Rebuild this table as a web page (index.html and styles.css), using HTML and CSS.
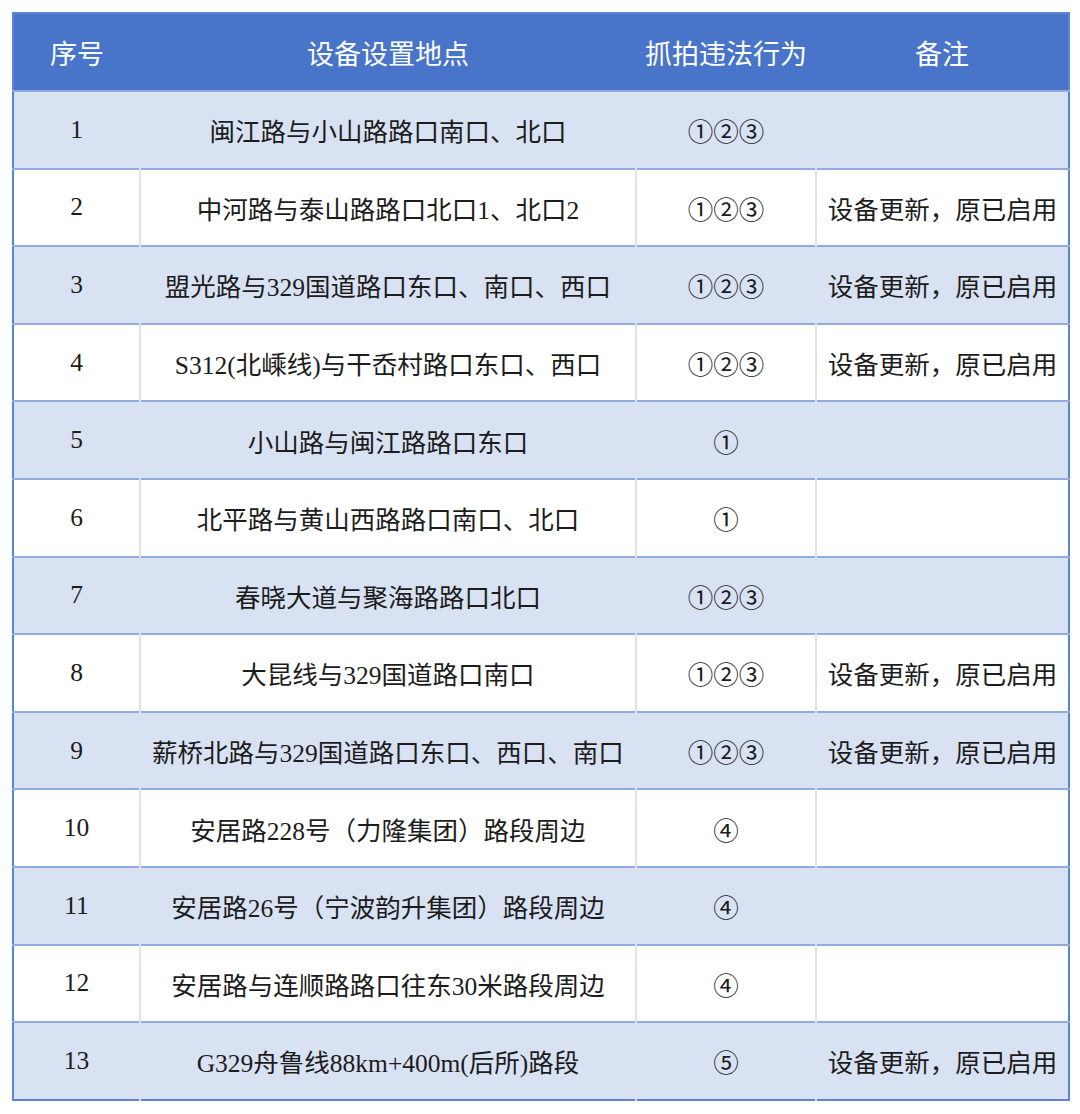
FILE: index.html
```html
<!DOCTYPE html>
<html lang="zh-CN">
<head>
<meta charset="utf-8">
<title>设备设置地点</title>
<link rel="stylesheet" href="styles.css">
</head>
<body>
<table class="sheet">
  <colgroup>
    <col class="c-no"><col class="c-loc"><col class="c-act"><col class="c-note">
  </colgroup>
  <thead>
    <tr><th>序号</th><th>设备设置地点</th><th>抓拍违法行为</th><th>备注</th></tr>
  </thead>
  <tbody>
    <tr class="alt"><td>1</td><td>闽江路与小山路路口南口、北口</td><td>①②③</td><td></td></tr>
    <tr><td>2</td><td>中河路与泰山路路口北口1、北口2</td><td>①②③</td><td>设备更新，原已启用</td></tr>
    <tr class="alt"><td>3</td><td>盟光路与329国道路口东口、南口、西口</td><td>①②③</td><td>设备更新，原已启用</td></tr>
    <tr><td>4</td><td>S312(北嵊线)与干岙村路口东口、西口</td><td>①②③</td><td>设备更新，原已启用</td></tr>
    <tr class="alt"><td>5</td><td>小山路与闽江路路口东口</td><td>①</td><td></td></tr>
    <tr><td>6</td><td>北平路与黄山西路路口南口、北口</td><td>①</td><td></td></tr>
    <tr class="alt"><td>7</td><td>春晓大道与聚海路路口北口</td><td>①②③</td><td></td></tr>
    <tr><td>8</td><td>大昆线与329国道路口南口</td><td>①②③</td><td>设备更新，原已启用</td></tr>
    <tr class="alt"><td>9</td><td>薪桥北路与329国道路口东口、西口、南口</td><td>①②③</td><td>设备更新，原已启用</td></tr>
    <tr><td>10</td><td>安居路228号（力隆集团）路段周边</td><td>④</td><td></td></tr>
    <tr class="alt"><td>11</td><td>安居路26号（宁波韵升集团）路段周边</td><td>④</td><td></td></tr>
    <tr><td>12</td><td>安居路与连顺路路口往东30米路段周边</td><td>④</td><td></td></tr>
    <tr class="alt"><td>13</td><td>G329舟鲁线88km+400m(后所)路段</td><td>⑤</td><td>设备更新，原已启用</td></tr>
  </tbody>
</table>
</body>
</html>
```

FILE: styles.css
```css
html, body {
  margin: 0;
  padding: 0;
  background: #ffffff;
}
body {
  padding: 12px 0 0 12px;
  font-family: "Liberation Serif", "Noto Sans CJK SC", serif;
  color: #1c1c1c;
}
.sheet {
  border-collapse: collapse;
  table-layout: fixed;
  width: 1056px;
  border: 2px solid #5b84d4;
}
.c-no { width: 127px; }
.c-loc { width: 496px; }
.c-act { width: 180px; }
.c-note { width: 253px; }

.sheet th {
  height: 76px;
  padding: 0;
  background: #4874c9;
  color: #ffffff;
  font-weight: normal;
  font-size: 27px;
  font-family: "Noto Sans CJK SC", sans-serif;
  text-align: center;
  border-bottom: 2px solid #8fabe0;
}
.sheet td {
  height: 75.6px;
  padding: 0;
  font-size: 25.5px;
  text-align: center;
  white-space: nowrap;
  border-top: 2px solid #8fabe0;
  border-left: 2px solid #e2e2e2;
}
.sheet td:first-child { border-left: none; }
.sheet tr.alt td {
  background: #d9e2f3;
  border-left-color: #d9e2f3;
}
```
